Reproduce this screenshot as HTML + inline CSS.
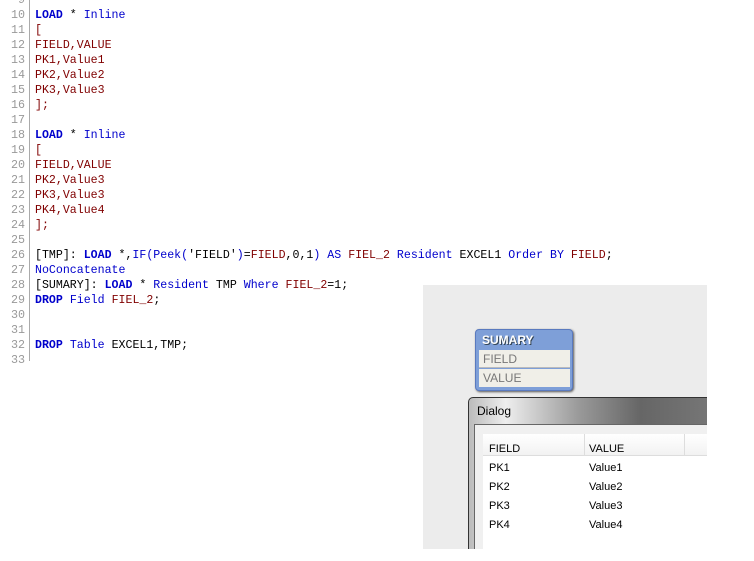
<!DOCTYPE html>
<html><head><style>
body{margin:0;width:754px;height:561px;background:#fff;position:relative;overflow:hidden;font-family:"Liberation Mono",monospace;}
.ln{position:absolute;left:0;width:25px;text-align:right;color:#999;font-size:11.7px;line-height:15px;}
.sep{position:absolute;left:29px;top:0;width:1px;height:361px;background:#aaa;}
.c{position:absolute;left:35px;font-size:11.6px;line-height:15px;white-space:pre;color:#000;}
.k{color:#00c;font-weight:bold}.b{color:#00c}.r{color:#800000}
.s{font-family:"Liberation Sans",sans-serif;font-size:11px;}
</style></head><body>
<div class="sep"></div>
<div class="ln" style="top:-7px">9</div>
<div class="ln" style="top:8px">10<br>11<br>12<br>13<br>14<br>15<br>16<br>17<br>18<br>19<br>20<br>21<br>22<br>23<br>24<br>25<br>26<br>27<br>28<br>29<br>30<br>31<br>32<br>33</div>
<div class="c" style="top:8px"><span class="k">LOAD</span> * <span class="b">Inline</span>
<span class="r">[
FIELD,VALUE
PK1,Value1
PK2,Value2
PK3,Value3
];</span>

<span class="k">LOAD</span> * <span class="b">Inline</span>
<span class="r">[
FIELD,VALUE
PK2,Value3
PK3,Value3
PK4,Value4
];</span>

[TMP]: <span class="k">LOAD</span> *,<span class="b">IF(Peek(</span>'FIELD'<span class="b">)</span>=<span class="r">FIELD</span>,0,1<span class="b">) AS</span> <span class="r">FIEL_2</span> <span class="b">Resident</span> EXCEL1 <span class="b">Order BY</span> <span class="r">FIELD</span>;
<span class="b">NoConcatenate</span>
[SUMARY]: <span class="k">LOAD</span> * <span class="b">Resident</span> TMP <span class="b">Where</span> <span class="r">FIEL_2</span>=1;
<span class="k">DROP</span> <span class="b">Field</span> <span class="r">FIEL_2</span>;


<span class="k">DROP</span> <span class="b">Table</span> EXCEL1,TMP;
</div>
<div style="position:absolute;left:423px;top:285px;width:284px;height:264px;background:#ececec;overflow:hidden;">
<div style="position:absolute;left:52px;top:44px;width:96px;height:60px;background:#7e9fd8;border-radius:4px;border:1px solid #5a7abf;box-shadow:1px 1px 2px #555;">
<div class="s" style="position:absolute;left:6px;top:3px;color:#fff;font-weight:bold;font-size:12px;text-shadow:1px 1px 0 #345">SUMARY</div>
<div class="s" style="position:absolute;left:3px;top:20px;width:91px;height:18px;background:#f0efe8;border-bottom:1px solid #bbb;color:#777;line-height:18px;padding-left:4px;box-sizing:border-box;font-size:12px">FIELD</div>
<div class="s" style="position:absolute;left:3px;top:39px;width:91px;height:18px;background:#f0efe8;color:#777;line-height:18px;padding-left:4px;box-sizing:border-box;font-size:12px">VALUE</div>
</div>
<div style="position:absolute;left:45px;top:112px;width:245px;height:160px;background:linear-gradient(90deg,#bbb 0%,#eee 15%,#999 45%,#666 70%,#777 100%);border-radius:5px 0 0 0;border:1px solid #333;">
<div class="s" style="position:absolute;left:8px;top:6px;color:#000;font-size:12px">Dialog</div>
<div style="position:absolute;left:5px;top:26px;right:0;bottom:0;background:#f0f0f0;border:1px solid #666;">
<div style="position:absolute;left:8px;top:9px;right:0;bottom:0;background:#fff;">
<div style="position:absolute;left:0;top:0;right:0;height:21px;background:linear-gradient(#fff,#f2f2f2);border-bottom:1px solid #ddd"></div>
<div style="position:absolute;left:101px;top:0;width:1px;height:21px;background:#ddd"></div>
<div style="position:absolute;left:201px;top:0;width:1px;height:21px;background:#ddd"></div>
<div class="s" style="position:absolute;left:6px;top:6px;line-height:19px;color:#000">FIELD<br>PK1<br>PK2<br>PK3<br>PK4</div>
<div class="s" style="position:absolute;left:106px;top:6px;line-height:19px;color:#000">VALUE<br>Value1<br>Value2<br>Value3<br>Value4</div>
</div></div></div>
</div>
</body></html>
